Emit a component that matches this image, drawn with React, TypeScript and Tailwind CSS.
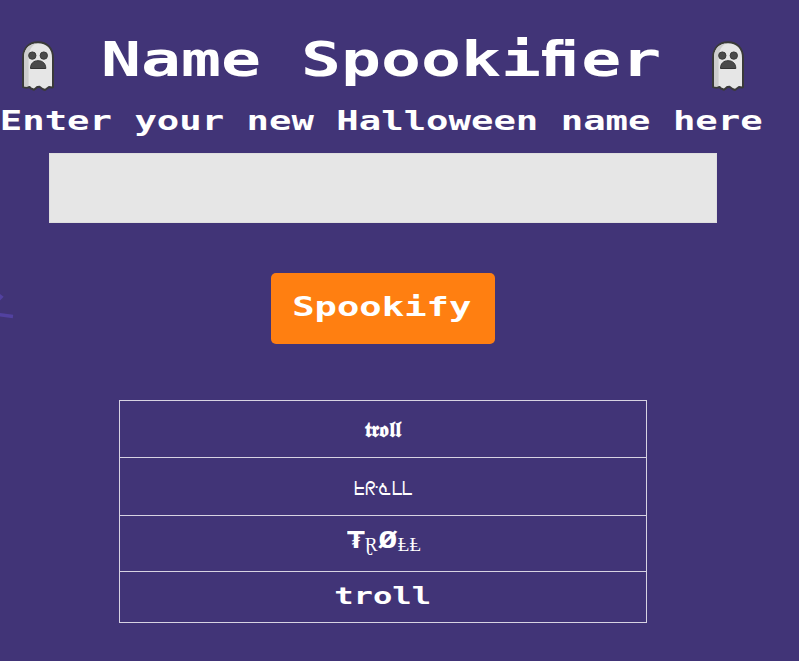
import React from "react";

const pixel = "font-['DejaVu_Sans_Mono','Liberation_Mono',monospace] font-bold text-white whitespace-pre";

function Ghost() {
  return (
    <svg className="h-[52px] w-[36px] shrink-0" viewBox="0 0 36 52">
      <path
        d="M3 47V18C3 8 9 2.2 18 2.2S33 8 33 18v29l-1 .5-3-.5-4 3-2.5-1-3-2.3-2 .2-3.500 2.800-3-1.2L9.500 47l-3 .8z"
        fill="#e6e6e6"
        stroke="#3a3a3a"
        strokeWidth="2"
        strokeLinejoin="round"
      />
      <path d="M4 46.500V18C4 10 8 4 15.500 3.400C10.500 7 8.600 12 8.600 18v28l-2.300.8z" fill="#cdcdcd" />
      <circle cx="12.300" cy="15.600" r="3.700" fill="#4b4b4b" stroke="#333" strokeWidth=".9" />
      <circle cx="23.800" cy="15.600" r="3.700" fill="#4b4b4b" stroke="#333" strokeWidth=".9" />
      <path d="M10.500 28.500c0-5 3-7.800 7.600-7.800s7.700 2.800 7.700 7.800z" fill="#4b4b4b" stroke="#333" strokeWidth="1" />
    </svg>
  );
}

export default function App() {
  return (
    <div className="relative h-[661px] w-[799px] overflow-hidden bg-[#413477]">
      <svg className="absolute left-0 top-[290px] h-[32px] w-[16px]" viewBox="0 0 16 32">
        <path d="M-3 4L1 7L-2 10M-2 24.500L13 26.500" fill="none" stroke="#5241a0" strokeWidth="3.500" />
      </svg>
      <main className="flex w-[766px] flex-col items-center pt-[40px]">
        <header className="flex h-[52px] w-[726px] items-start justify-between">
          <Ghost />
          <h1 className={`${pixel} -mt-[5px] -ml-[5px] flex h-[48px] w-[560px] origin-left scale-x-[1.384] text-[48px] leading-[48px]`}>
            <span className="w-[318px] shrink-0">Name Spooki</span>
            <span className="w-[29px] shrink-0 font-['DejaVu_Sans',sans-serif]">
              <span className="inline-block origin-left scale-x-[0.76]">fi</span>
            </span>
            <span>er</span>
          </h1>
          <Ghost />
        </header>
        <h2 className={`${pixel} mt-[12px] mr-[4px] h-[34px] origin-center scale-x-[1.386] text-[26.900px] leading-[34px]`}>
          Enter your new Halloween name here
        </h2>
        <input aria-label="Name" className="mt-[15px] h-[70px] w-[668px] border border-[#dedede] bg-[#e6e6e6] outline-none" />
        <button className="mt-[50px] flex h-[71px] w-[224px] items-center justify-center rounded-[5px] bg-[#ff7f11] pr-[2px] pb-[4px]">
          <span className={`${pixel} scale-x-[1.383] text-[26.900px] leading-[34px]`}>Spookify</span>
        </button>
        <table className="mt-[56px] w-[528px] border-collapse text-center text-white">
          <tbody>
            <tr className="h-[57px]">
              <td className="border border-[#d7d3e2] p-0 pt-[2px] font-['DejaVu_Sans','DejaVu_Serif',serif] text-[20.500px] font-bold leading-[24px]">𝖙𝖗𝖔𝖑𝖑</td>
            </tr>
            <tr className="h-[58px]">
              <td className="border border-[#d7d3e2] p-0 pt-[4px] font-['DejaVu_Sans',sans-serif] text-[18.500px] leading-[24px] font-extralight">
                <span className="inline-block scale-x-[0.96]">ᖶᖇᓍᒪᒪ</span>
              </td>
            </tr>
            <tr className="h-[56px]">
              <td className="border border-[#d7d3e2] p-0">
                <div className="flex h-[32px] items-start justify-center pl-[2px] font-['Liberation_Serif','DejaVu_Serif',serif] text-[19.200px] leading-[24px]">
                  <span className={`${pixel} flex w-[18px] justify-center text-[23px]`}>
                    <span className="scale-x-[1.250]">₮</span>
                  </span>
                  <span className="w-[13px] pt-[5px]">Ɽ</span>
                  <span className={`${pixel} flex w-[20px] justify-center text-[23px]`}>
                    <span className="scale-x-[1.383]">Ø</span>
                  </span>
                  <span className="pt-[5px]">
                    <span className="inline-block">ⱠⱠ</span>
                  </span>
                </div>
              </td>
            </tr>
            <tr className="h-[51px]">
              <td className="border border-[#d7d3e2] p-0">
                <span className={`${pixel} inline-block scale-x-[1.400] text-[23px] leading-[24px]`}>troll</span>
              </td>
            </tr>
          </tbody>
        </table>
      </main>
    </div>
  );
}
